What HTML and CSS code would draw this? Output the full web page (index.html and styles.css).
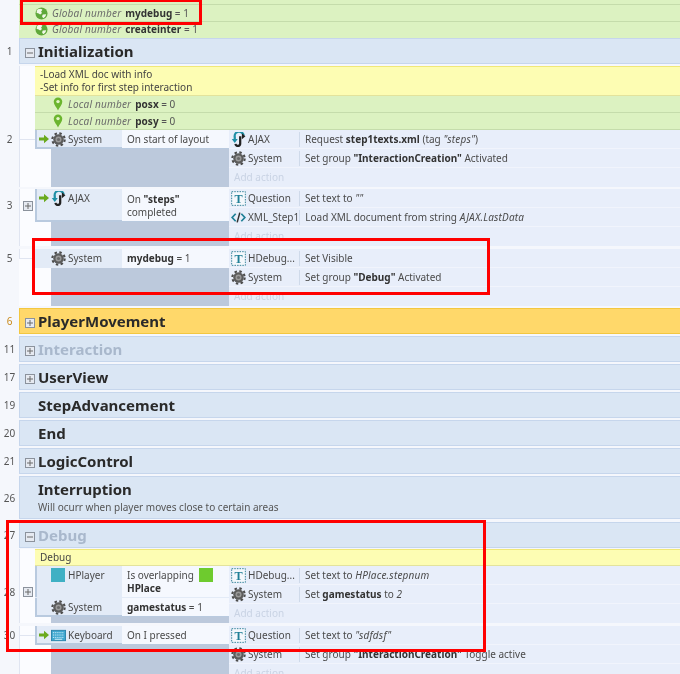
FILE: index.html
```html
<!DOCTYPE html>
<html lang="en">
<head>
<meta charset="utf-8">
<title>Event sheet</title>
<link rel="stylesheet" href="styles.css">
</head>
<body>
<svg class="sprite" aria-hidden="true">
  <symbol id="gear" viewBox="0 0 16 16"><circle cx="8" cy="8" r="5.6" fill="#5c5c5c"/><circle cx="8" cy="8" r="6.6" fill="none" stroke="#4c4c4c" stroke-width="2.2" stroke-dasharray="2.6 2.6"/><circle cx="8" cy="8" r="3.2" fill="#9a9a9a"/><circle cx="8" cy="8" r="1.7" fill="#6a6a6a"/></symbol>
  <symbol id="globe" viewBox="0 0 14 14"><circle cx="7" cy="7" r="6.5" fill="#5fa83a"/><path d="M3 2.5c2-1 4-.6 5 .4L6.5 5 7.6 6.4 5.6 8 3.4 6.6 1.8 6.4C1.8 5 2 3.6 3 2.5zM8.4 8.2l3.6-.4c-.2 1.8-1.6 3.6-3.2 4.4L7.6 10z" fill="#f2f7ea"/></symbol>
  <symbol id="pin" viewBox="0 0 10 14"><path d="M5 .5a4.3 4.3 0 0 1 4.3 4.3C9.3 7.8 6.2 10.6 5 13.6 3.8 10.6.7 7.8.7 4.8A4.3 4.3 0 0 1 5 .5z" fill="#6bb52e"/><circle cx="5" cy="4.6" r="1.7" fill="#e4f4c8"/></symbol>
  <symbol id="arrow" viewBox="0 0 10 10"><path d="M0 3.4h5V.8L10 5 5 9.2V6.6H0z" fill="#6aaa1e"/></symbol>
  <symbol id="ajax" viewBox="0 0 16 16"><path d="M13.5 3.6A4.6 4.6 0 0 0 4 5.4V8.5" fill="none" stroke="#1f8fa6" stroke-width="2.4"/><path d="M.8 7.4h6.4L4 11.6z" fill="#1f8fa6"/><path d="M9.8 4.5v7.7a2.5 2.5 0 0 1-5 .4" fill="none" stroke="#222" stroke-width="2.4"/><path d="M11.6 1.2v6.4l3.8-3.2z" fill="#222"/></symbol>
  <symbol id="tobj" viewBox="0 0 16 16"><rect x=".7" y=".7" width="14.6" height="14.6" fill="#f4f8fc" stroke="#2f7f95" stroke-dasharray="1.6 1.2"/><text x="8" y="12.6" text-anchor="middle" class="t-glyph">T</text></symbol>
  <symbol id="xml" viewBox="0 0 16 16"><path d="M5 4 1.2 8 5 12" fill="none" stroke="#1f7f96" stroke-width="1.9"/><path d="M11 4l3.8 4L11 12" fill="none" stroke="#1f7f96" stroke-width="1.9"/><path d="M9.4 2.8 6.6 13.2" fill="none" stroke="#333" stroke-width="1.6"/></symbol>
  <symbol id="keyboard" viewBox="0 0 16 12"><rect x=".5" y=".5" width="15" height="11" fill="#3fa7cf" stroke="#2b84ab"/><path d="M2 3h12M2 5.5h12M2 8h12" stroke="#d8f0fb" stroke-dasharray="1.2 .8"/><path d="M4 10h8" stroke="#d8f0fb"/></symbol>
  <symbol id="minus" viewBox="0 0 10 10"><rect x=".5" y=".5" width="9" height="9" fill="#e6eaf1" stroke="#8b929c"/><path d="M2 5h6" stroke="#6a6a6a"/></symbol>
  <symbol id="plus" viewBox="0 0 10 10"><rect x=".5" y=".5" width="9" height="9" fill="#e6eaf1" stroke="#8b929c"/><path d="M2 5h6M5 2v6" stroke="#6a6a6a"/></symbol>
</svg>

<div class="sheet">
  <div class="var var-strip"></div>
  <div class="var var-global"><svg class="ic-globe"><use href="#globe"/></svg><i>Global number</i> <span><b>mydebug</b> = 1</span></div>
  <div class="var var-global var-end"><svg class="ic-globe"><use href="#globe"/></svg><i>Global number</i> <span><b>createinter</b> = 1</span></div>

  <div class="row">
    <div class="num num-group">1</div>
    <div class="group"><svg class="toggle"><use href="#minus"/></svg><h2>Initialization</h2></div>
  </div>

  <div class="row body-top">
    <div class="num"></div>
    <div class="tree"></div>
    <div class="stack">
      <div class="comment comment-2">-Load XML doc with info<br>-Set info for first step interaction</div>
      <div class="var var-local"><svg class="ic-pin"><use href="#pin"/></svg><i>Local number</i> <span><b>posx</b> = 0</span></div>
      <div class="var var-local"><svg class="ic-pin"><use href="#pin"/></svg><i>Local number</i> <span><b>posy</b> = 0</span></div>
    </div>
  </div>

  <div class="row gap-2">
    <div class="num num-h19">2</div>
    <div class="tree tree-h19"></div>
    <div class="conds">
      <div class="cond cond-sel">
        <div class="c-obj"><span class="slot"><svg class="ic-arrow"><use href="#arrow"/></svg></span><svg class="ic"><use href="#gear"/></svg>System</div>
        <div class="c-param">On start of layout</div>
      </div>
      <div class="fill"></div>
    </div>
    <div class="actions">
      <div class="act"><div class="a-obj"><svg class="ic"><use href="#ajax"/></svg>AJAX</div><div class="a-text">Request <b>step1texts.xml</b> (tag <i>"steps"</i>)</div></div>
      <div class="act"><div class="a-obj"><svg class="ic"><use href="#gear"/></svg>System</div><div class="a-text">Set group <b>"InteractionCreation"</b> Activated</div></div>
      <div class="act add">Add action</div>
    </div>
  </div>

  <div class="row gap-3">
    <div class="num num-h33">3</div>
    <div class="tree tree-h33"><svg class="toggle"><use href="#plus"/></svg></div>
    <div class="conds">
      <div class="cond cond-sel">
        <div class="c-obj"><span class="slot"><svg class="ic-arrow"><use href="#arrow"/></svg></span><svg class="ic"><use href="#ajax"/></svg>AJAX</div>
        <div class="c-param c-param-low">On <b>"steps"</b><br>completed</div>
      </div>
      <div class="fill"></div>
    </div>
    <div class="actions">
      <div class="act"><div class="a-obj"><svg class="ic"><use href="#tobj"/></svg>Question</div><div class="a-text">Set text to <i>""</i></div></div>
      <div class="act"><div class="a-obj"><svg class="ic"><use href="#xml"/></svg>XML_Step1</div><div class="a-text">Load XML document from string <i>AJAX.LastData</i></div></div>
      <div class="act add">Add action</div>
    </div>
  </div>

  <div class="row gap-2">
    <div class="num num-h19">5</div>
    <div class="tree tree-h19 tree-last"></div>
    <div class="conds">
      <div class="cond">
        <div class="c-obj"><span class="slot"></span><svg class="ic"><use href="#gear"/></svg>System</div>
        <div class="c-param"><b>mydebug</b> = 1</div>
      </div>
      <div class="fill"></div>
    </div>
    <div class="actions">
      <div class="act"><div class="a-obj"><svg class="ic"><use href="#tobj"/></svg>HDebug...</div><div class="a-text">Set Visible</div></div>
      <div class="act"><div class="a-obj"><svg class="ic"><use href="#gear"/></svg>System</div><div class="a-text">Set group <b>"Debug"</b> Activated</div></div>
      <div class="act add">Add action</div>
    </div>
  </div>

  <div class="row gap-2"><div class="num num-group num-hot">6</div><div class="group group-hot"><svg class="toggle"><use href="#plus"/></svg><h2>PlayerMovement</h2></div></div>
  <div class="row gap-2"><div class="num num-group">11</div><div class="group group-off"><svg class="toggle"><use href="#plus"/></svg><h2>Interaction</h2></div></div>
  <div class="row gap-2"><div class="num num-group">17</div><div class="group"><svg class="toggle"><use href="#plus"/></svg><h2>UserView</h2></div></div>
  <div class="row gap-2"><div class="num num-group">19</div><div class="group"><span class="toggle"></span><h2>StepAdvancement</h2></div></div>
  <div class="row gap-2"><div class="num num-group">20</div><div class="group"><span class="toggle"></span><h2>End</h2></div></div>
  <div class="row gap-2"><div class="num num-group">21</div><div class="group"><svg class="toggle"><use href="#plus"/></svg><h2>LogicControl</h2></div></div>
  <div class="row gap-2">
    <div class="num num-tall">26</div>
    <div class="group group-tall"><span class="toggle"></span><div><h2>Interruption</h2><p>Will ocurr when player moves close to certain areas</p></div></div>
  </div>
  <div class="row gap-1"><div class="num num-group">27</div><div class="group group-off"><svg class="toggle"><use href="#minus"/></svg><h2>Debug</h2></div></div>

  <div class="row">
    <div class="num"></div>
    <div class="tree"></div>
    <div class="stack"><div class="comment comment-1">Debug</div></div>
  </div>

  <div class="row gap-3">
    <div class="num num-h52">28</div>
    <div class="tree tree-h52"><svg class="toggle"><use href="#plus"/></svg></div>
    <div class="conds">
      <div class="cond cond-sel cond-stack">
        <div class="cond-line">
          <div class="c-obj"><span class="slot"></span><span class="sprite-box sprite-teal"></span>HPlayer</div>
          <div class="c-param c-param-high">Is overlapping <span class="sprite-box sprite-green"></span><br><b>HPlace</b></div>
        </div>
        <div class="cond-line">
          <div class="c-obj"><span class="slot"></span><svg class="ic"><use href="#gear"/></svg>System</div>
          <div class="c-param"><b>gamestatus</b> = 1</div>
        </div>
      </div>
      <div class="fill"></div>
    </div>
    <div class="actions">
      <div class="act"><div class="a-obj"><svg class="ic"><use href="#tobj"/></svg>HDebug...</div><div class="a-text">Set text to <i>HPlace.stepnum</i></div></div>
      <div class="act"><div class="a-obj"><svg class="ic"><use href="#gear"/></svg>System</div><div class="a-text">Set <b>gamestatus</b> to <i>2</i></div></div>
      <div class="act add">Add action</div>
    </div>
  </div>

  <div class="row">
    <div class="num num-h19">30</div>
    <div class="tree tree-h19"></div>
    <div class="conds">
      <div class="cond cond-sel">
        <div class="c-obj"><span class="slot"><svg class="ic-arrow"><use href="#arrow"/></svg></span><svg class="ic"><use href="#keyboard"/></svg>Keyboard</div>
        <div class="c-param">On I pressed</div>
      </div>
      <div class="fill"></div>
    </div>
    <div class="actions">
      <div class="act"><div class="a-obj"><svg class="ic"><use href="#tobj"/></svg>Question</div><div class="a-text">Set text to <i>"sdfdsf"</i></div></div>
      <div class="act"><div class="a-obj"><svg class="ic"><use href="#gear"/></svg>System</div><div class="a-text">Set group <b>"InteractionCreation"</b> Toggle active</div></div>
      <div class="act add">Add action</div>
    </div>
  </div>

  <div class="mark mark-top"></div>
  <div class="mark mark-event"></div>
  <div class="mark mark-debug"></div>
</div>
</body>
</html>
```
FILE: styles.css
```css
* { box-sizing: border-box; }
html, body { margin: 0; height: 100%; overflow: hidden; background: #f5f7fc; }
.sprite { display: block; width: 0; height: 0; }
.t-glyph { font: bold 13px "Liberation Serif", serif; fill: #1f7f96; }

.sheet {
  position: relative;
  width: 680px;
  height: 674px;
  overflow: hidden;
  font: 10px/13px "Noto Sans", sans-serif;
  color: #4a4a4a;
  background: #f5f7fc;
  filter: blur(0.4px);
}
b { color: #333; font-weight: 700; }
i { font-style: italic; letter-spacing: 0.2px; }

/* rows */
.row { display: flex; align-items: stretch; }
.gap-1 { margin-bottom: 1px; }
.gap-2 { margin-bottom: 2px; }
.gap-3 { margin-bottom: 3px; }
.body-top { margin-top: 2px; }
.num { flex: 0 0 19px; text-align: center; font-size: 10px; color: #555; }
.num-group { line-height: 26px; }
.num-hot { color: #c98a1a; }
.num-tall { line-height: 44px; }
.num-h19 { line-height: 19px; }
.num-h33 { line-height: 33px; }
.num-h52 { line-height: 52px; }

/* tree gutter */
.tree {
  flex: 0 0 16px;
  display: flex;
  align-items: flex-start;
  justify-content: center;
  background: linear-gradient(#e0e5f1, #e0e5f1) 0 0 / 1px 100% no-repeat, #fbfcff;
}
.tree-h19 { background: linear-gradient(#e0e5f1, #e0e5f1) 0 9px / 16px 1px no-repeat, linear-gradient(#e0e5f1, #e0e5f1) 0 0 / 1px 100% no-repeat, #fbfcff; }
.tree-last { background: linear-gradient(#e0e5f1, #e0e5f1) 0 9px / 16px 1px no-repeat, linear-gradient(#e0e5f1, #e0e5f1) 0 0 / 1px 10px no-repeat, #fbfcff; }
.tree-h33 { padding: 12px 0 0 2px; }
.tree-h52 { padding: 21px 0 0 2px; }
.tree .toggle { margin: 0; }

/* variables */
.var {
  display: flex;
  align-items: center;
  height: 17px;
  background: #dcf2c1;
  border-bottom: 1px solid #c5dcab;
  color: #555;
  white-space: pre;
}
.var-strip { height: 5px; margin-left: 19px; }
.var-global { margin-left: 19px; padding-left: 16px; }
.var-end { height: 16px; border-bottom-color: #dcf2c1; }
.var-local { padding-left: 18px; }
.var i { margin-right: 4px; color: #6b6b6b; }
.ic-globe { width: 13px; height: 13px; margin-right: 4px; }
.ic-pin { width: 10px; height: 14px; margin-right: 5px; }

/* groups */
.group {
  flex: 1;
  display: flex;
  align-items: center;
  height: 26px;
  padding-left: 5px;
  background: #dae6f4;
  border: 1px solid #c6d6ec;
  border-width: 1px 0 1px 1px;
}
.group h2 { margin: 0; font: 700 15px/20px "Noto Sans", sans-serif; color: #2a2a2a; }
.group p { margin: 1px 0 0; font-size: 10px; line-height: 14px; color: #555; }
.group-hot { background: #ffd86a; border-color: #f3c740; }
.group-off h2 { color: #a9b8cc; }
.group-tall { height: 43px; align-items: flex-start; padding-top: 2px; }
.toggle { flex: 0 0 10px; width: 10px; height: 10px; margin-right: 3px; }
.group .toggle { margin-top: 3px; }
.group-tall .toggle { margin-top: 0; }

/* comments */
.stack { flex: 1; min-width: 0; }
.comment {
  padding-left: 5px;
  background: #fdfdb3;
  border-top: 1px solid #f0e878;
  border-bottom: 1px solid #e3e39c;
  color: #444;
}
.comment-2 { height: 30px; padding-top: 1px; }
.comment-1 { height: 17px; line-height: 15px; }

/* conditions */
.conds { flex: 0 0 194px; display: flex; flex-direction: column; background: #fbfcff; }
.cond { display: flex; min-height: 19px; background: #e3ebf7; flex-shrink: 0; }
.cond-sel { box-shadow: inset 2px 0 #b9cadf, inset 0 -2px #b9cadf; padding-bottom: 1px; }
.cond-stack { display: block; }
.cond-line { display: flex; }
.cond-line + .cond-line { border-top: 1px solid #e3ebf7; }
.c-obj {
  flex: 0 0 87px;
  display: flex;
  align-items: flex-start;
  height: 18px;
  line-height: 18px;
  white-space: nowrap;
}
.cond-line:first-child .c-obj { height: 31px; }
.slot { flex: 0 0 16px; display: flex; justify-content: flex-end; padding: 4px 2px 0 0; }
.ic-arrow { width: 10px; height: 10px; }
.ic { flex: 0 0 15px; width: 15px; height: 15px; margin: 2px 2px 0 0; }
.c-param {
  flex: 1;
  min-height: 18px;
  padding: 3px 0 2px 5px;
  background: #f5f8fe;
}
.c-param-low { padding-top: 4px; }
.c-param-high { padding-top: 2px; min-height: 31px; }
.fill { flex: 1; margin-left: 16px; background: #bcc9dc; }
.sprite-box { display: inline-block; }
.sprite-teal { flex: 0 0 14px; width: 14px; height: 14px; margin: 2px 3px 0 0; background: #3fb0c4; }
.sprite-green { width: 14px; height: 14px; margin-left: 3px; vertical-align: -3px; background: #6ecb2e; }

/* actions */
.actions { flex: 1; min-width: 0; background: #e8eefa; }
.act {
  display: flex;
  height: 19px;
  align-items: center;
  border-bottom: 1px solid #f1f4fc;
  white-space: nowrap;
}
.a-obj {
  flex: 0 0 71px;
  display: flex;
  align-items: center;
  height: 15px;
  padding-left: 2px;
  border-right: 1px solid #cfdaea;
}
.a-obj .ic { margin: 0 2px 0 0; }
.a-text { padding-left: 5px; }
.add { padding-left: 5px; color: #c9d3e4; border-bottom: 0; }

/* red annotation boxes drawn over the screenshot */
.mark { position: absolute; border: 3px solid #f00; }
.mark-top { left: 20px; top: -1px; width: 182px; height: 26px; }
.mark-event { left: 32px; top: 238px; width: 458px; height: 57px; }
.mark-debug { left: 6px; top: 520px; width: 480px; height: 132px; }
```
